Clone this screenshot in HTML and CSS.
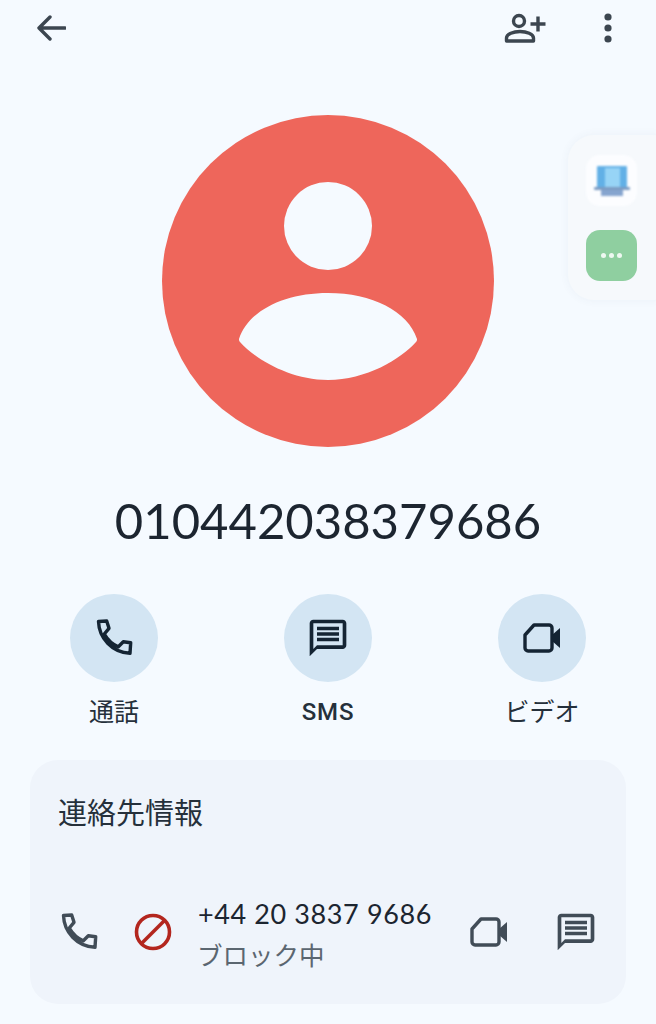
FILE: index.html
```html
<!DOCTYPE html>
<html lang="ja">

<head>
    <meta charset="UTF-8">
    <meta name="viewport" content="width=device-width, initial-scale=1.0">
    <title>Contact</title>
    <link rel="stylesheet" href="styles.css">
</head>

<body>

    <div class="topbar">
        <svg class="back-icon" width="30" height="26" viewBox="0 0 30 26">
            <path d="M29 13H3M14 2 3 13l11 11" fill="none" stroke="#3c4650" stroke-width="3.4" stroke-linecap="round" stroke-linejoin="round"/>
        </svg>
        <div class="topbar-right">
            <svg width="42" height="38" viewBox="0 0 42 38">
                <circle cx="15" cy="12" r="5.5" fill="none" stroke="#3c4650" stroke-width="3.4"/>
                <path d="M2.500 32v-3c0-4 7-6.500 13.500-6.500s13.500 2.500 13.500 6.500v3z" fill="none" stroke="#3c4650" stroke-width="3.4" stroke-linejoin="round"/>
                <path d="M34 7.500v15M26.500 15h15" fill="none" stroke="#3c4650" stroke-width="3.4"/>
            </svg>
            <svg class="more-icon" width="8" height="30" viewBox="0 0 8 30">
                <circle cx="4" cy="4" r="3.600" fill="#3c4650"/>
                <circle cx="4" cy="15" r="3.600" fill="#3c4650"/>
                <circle cx="4" cy="26" r="3.600" fill="#3c4650"/>
            </svg>
        </div>
    </div>

    <div class="avatar-wrap">
        <svg width="332" height="332" viewBox="0 0 332 332">
            <circle cx="166" cy="166" r="166" fill="#ee665b"/>
            <circle cx="166" cy="111" r="44" fill="#f5faff"/>
            <path d="M77 224C86 196 122 178 166 178s80 18 89 46c0 1 0 2-1 3-15 17-50 38-88 38s-73-21-88-38c-1-1-1-2-1-3z" fill="#f5faff"/>
        </svg>
    </div>

    <h1 class="number">010442038379686</h1>

    <div class="actions">
        <div class="action">
            <div class="action-circle">
                <svg width="40" height="40" viewBox="0 0 40 40">
                    <path d="M4.500 3.500l8.200-.5 2.300 7.300-4.700 5.700c3.200 5.500 8.700 10.500 14 12.700l5-5 7.400 1-.7 10.600c-18-.8-31-15.300-31.500-31.800z" fill="none" stroke="#142433" stroke-width="3.400" stroke-linejoin="round"/>
                </svg>
            </div>
            <span class="action-label">通話</span>
        </div>
        <div class="action">
            <div class="action-circle">
                <svg width="44" height="44" viewBox="0 0 24 24" fill="#142433">
                    <path d="M20 2H4c-1.100 0-2 .9-2 2v18l4-4h14c1.100 0 2-.9 2-2V4c0-1.100-.9-2-2-2zm0 14H6l-2 2V4h16v12z"/>
                    <path d="M6 12h12v2H6zM6 9h12v2H6zM6 6h12v2H6z" transform="translate(0 -.2)"/>
                </svg>
            </div>
            <span class="action-label action-label-latin">SMS</span>
        </div>
        <div class="action">
            <div class="action-circle">
                <svg class="video-icon" width="40" height="32" viewBox="0 0 40 32">
                    <path d="M11 3h15c1.500 0 3 1.200 3 3v20c0 1.500-1.500 3-3 3H5c-1.500 0-3-1.500-3-3V13z" fill="none" stroke="#142433" stroke-width="3.400" stroke-linejoin="round"/>
                    <path d="M29 13l8-7v20l-8-7z" fill="#142433"/>
                </svg>
            </div>
            <span class="action-label">ビデオ</span>
        </div>
    </div>

    <div class="card">
        <h2 class="card-title">連絡先情報</h2>
        <div class="card-row">
            <svg class="row-call" width="40" height="40" viewBox="0 0 40 40">
                <path d="M4.500 3.500l8.200-.5 2.300 7.300-4.700 5.700c3.200 5.500 8.700 10.500 14 12.700l5-5 7.400 1-.7 10.600c-18-.8-31-15.300-31.500-31.800z" fill="none" stroke="#414c57" stroke-width="3.400" stroke-linejoin="round"/>
            </svg>
            <svg class="row-block" width="38" height="38" viewBox="0 0 38 38">
                <circle cx="19" cy="19" r="16.500" fill="none" stroke="#b3261e" stroke-width="3.600"/>
                <path d="M7.500 30.500 30.500 7.500" stroke="#b3261e" stroke-width="3.600"/>
            </svg>
            <div class="row-text">
                <div class="row-number">+44 20 3837 9686</div>
                <div class="row-status">ブロック中</div>
            </div>
            <svg class="row-video" width="40" height="32" viewBox="0 0 40 32">
                <path d="M11 3h15c1.500 0 3 1.200 3 3v20c0 1.500-1.500 3-3 3H5c-1.500 0-3-1.500-3-3V13z" fill="none" stroke="#414c57" stroke-width="3.400" stroke-linejoin="round"/>
                <path d="M29 13l8-7v20l-8-7z" fill="#414c57"/>
            </svg>
            <svg class="row-message" width="44" height="44" viewBox="0 0 24 24" fill="#414c57">
                <path d="M20 2H4c-1.100 0-2 .9-2 2v18l4-4h14c1.100 0 2-.9 2-2V4c0-1.100-.9-2-2-2zm0 14H6l-2 2V4h16v12z"/>
                <path d="M6 12h12v2H6zM6 9h12v2H6zM6 6h12v2H6z" transform="translate(0 -.2)"/>
            </svg>
        </div>
    </div>

    <!-- floating side panel -->
    <div class="side-panel">
        <div class="side-tile side-tile-white">
            <svg width="36" height="30" viewBox="0 0 36 30">
                <rect x="3" y="0" width="30" height="22" rx="1" fill="#62b0e6"/>
                <rect x="11" y="2" width="15" height="20" fill="#97d4f6"/>
                <rect x="0" y="21" width="36" height="3" rx="1" fill="#7c9cc3"/>
                <rect x="7" y="24" width="22" height="6" fill="#86a5cf"/>
            </svg>
        </div>
        <div class="side-tile side-tile-green">
            <span class="dot"></span>
            <span class="dot"></span>
            <span class="dot"></span>
        </div>
    </div>

</body>
</html>
```

FILE: styles.css
```css
html, body {
    height: 100%;
}

body {
    position: relative;
    margin: 0;
    padding: 0;
    overflow: hidden;
    background-color: #f5faff;
    color: #1c2530;
    font-family: "Noto Sans CJK JP", "Noto Sans", sans-serif;
}

.topbar {
    display: flex;
    justify-content: space-between;
    align-items: center;
    height: 56px;
    padding: 0 44px 0 36px;
}

.topbar-right {
    display: flex;
    align-items: center;
    gap: 58px;
}

.avatar-wrap {
    display: flex;
    justify-content: center;
    margin-top: 59px;
}

.avatar-wrap svg {
    display: block;
}

.number {
    margin: 43px 0 0;
    height: 60px;
    line-height: 60px;
    text-align: center;
    font-family: Lato, sans-serif;
    font-size: 49px;
    font-weight: 400;
    color: #1c2530;
}

.actions {
    display: grid;
    grid-template-columns: repeat(3, 214px);
    justify-content: center;
    margin-top: 44px;
}

.action {
    display: flex;
    flex-direction: column;
    align-items: center;
}

.action-circle {
    display: flex;
    justify-content: center;
    align-items: center;
    width: 88px;
    height: 88px;
    border-radius: 50%;
    background-color: #d3e5f3;
}

.video-icon {
    margin-left: 2px;
}

.action-label {
    margin-top: 10px;
    height: 36px;
    line-height: 36px;
    font-size: 25px;
    color: #25303b;
}

.action-label-latin {
    line-height: 40px;
    font-family: Roboto, sans-serif;
    font-size: 24px;
    font-weight: 500;
    letter-spacing: 0.8px;
}

.card {
    display: flex;
    flex-direction: column;
    height: 244px;
    margin: 32px 30px 0;
    padding: 0 28px;
    box-sizing: border-box;
    border-radius: 28px;
    background-color: #eff4fb;
}

.card-title {
    margin: 30px 0 0;
    height: 42px;
    line-height: 42px;
    font-size: 29px;
    font-weight: 400;
    color: #25303b;
}

.card-row {
    display: flex;
    align-items: center;
    margin-top: 62px;
}

.row-call {
    margin-left: 1px;
}

.row-block {
    margin-left: 35px;
}

.row-text {
    flex: 1;
    margin-left: 26px;
}

.row-number {
    height: 40px;
    line-height: 40px;
    font-family: Lato, sans-serif;
    font-size: 27px;
    letter-spacing: 0.6px;
    color: #1c2530;
}

.row-status {
    height: 32px;
    margin-top: 4px;
    margin-left: -1px;
    line-height: 32px;
    font-size: 25.5px;
    color: #5b6670;
}

.row-message {
    margin-left: 44px;
}

.side-panel {
    position: absolute;
    top: 135px;
    left: 568px;
    display: flex;
    flex-direction: column;
    gap: 24px;
    width: 110px;
    height: 165px;
    box-sizing: border-box;
    padding: 20px 0 0 18px;
    border-radius: 26px;
    background-color: #f6f9fc;
    box-shadow: 0 0 10px rgba(60, 90, 120, 0.06);
}

.side-tile {
    display: flex;
    justify-content: center;
    align-items: center;
    width: 51px;
    height: 51px;
    border-radius: 14px;
}

.side-tile-white {
    background-color: #fcfdff;
    filter: blur(0.8px);
}

.side-tile-green {
    gap: 3px;
    background-color: #8fcfa0;
}

.dot {
    width: 5px;
    height: 5px;
    border-radius: 50%;
    background-color: #eef8f1;
}
```
